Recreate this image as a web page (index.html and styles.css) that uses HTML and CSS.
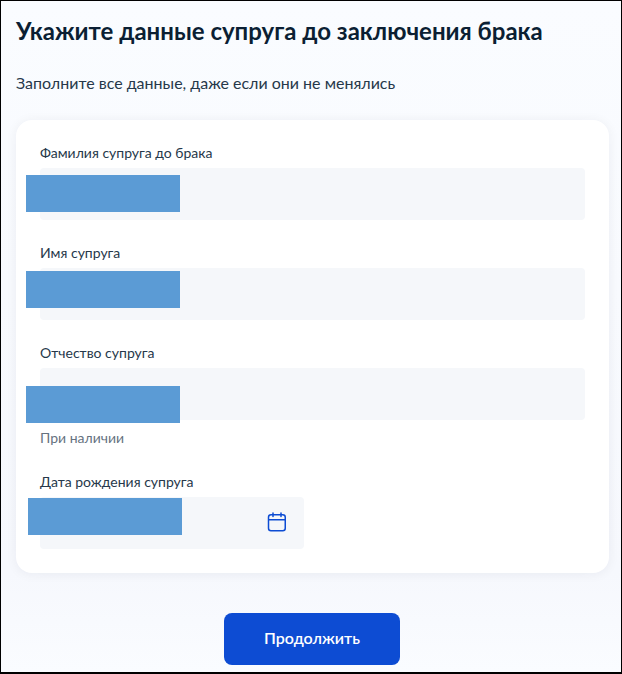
FILE: index.html
```html
<!DOCTYPE html>
<html lang="ru">
<head>
    <meta charset="UTF-8">
    <meta name="viewport" content="width=device-width, initial-scale=1.0">
    <title>Данные супруга</title>
    <link rel="stylesheet" href="styles.css">
</head>
<body>

    <div class="page">
        <h1>Укажите данные супруга до заключения брака</h1>
        <p class="subtitle">Заполните все данные, даже если они не менялись</p>

        <div class="card">
            <div class="form-row">
                <div class="form-label">Фамилия супруга до брака</div>
                <div class="form-input">
                    <div class="hidden-block hidden-top"></div>
                </div>
            </div>

            <div class="form-row">
                <div class="form-label">Имя супруга</div>
                <div class="form-input">
                    <div class="hidden-block hidden-up"></div>
                </div>
            </div>

            <div class="form-row">
                <div class="form-label">Отчество супруга</div>
                <div class="form-input">
                    <div class="hidden-block hidden-down"></div>
                </div>
                <div class="form-hint">При наличии</div>
            </div>

            <div class="form-row form-row-date">
                <div class="form-label">Дата рождения супруга</div>
                <div class="form-input form-input-date">
                    <div class="hidden-block hidden-date"></div>
                    <svg class="calendar-icon" width="20" height="20" viewBox="0 0 20 20" fill="none" stroke="#0d4cd3" stroke-width="1.5">
                        <rect x="1.5" y="2.75" width="16.75" height="16" rx="2.5"/>
                        <path d="M2 7.75H18"/>
                        <path d="M6 1V4.5M14 1V4.5" stroke-linecap="round"/>
                    </svg>
                </div>
            </div>
        </div>

        <div class="actions">
            <button class="continue-btn">Продолжить</button>
        </div>
    </div>

</body>
</html>
```

FILE: styles.css
```css
* {
    box-sizing: border-box;
}
html, body {
    margin: 0;
    padding: 0;
}
body {
    width: 622px;
    height: 674px;
    overflow: hidden;
    font-family: 'Lato', 'Noto Sans', sans-serif;
    color: #0b1f33;
}
.page {
    height: 674px;
    padding: 15px 12px 0 15px;
    border: 1px solid #000;
    border-width: 1px 1px 2px 1px;
    background: linear-gradient(180deg, #fafcff 0%, #f6f8fd 85%, #fafcff 100%);
}
h1 {
    margin: 0;
    font-size: 24px;
    line-height: 30px;
    font-weight: 700;
}
.subtitle {
    margin: 25px 0 0;
    font-size: 16px;
    line-height: 24px;
    color: #26384a;
}
.card {
    width: 593px;
    height: 453px;
    margin-top: 25px;
    padding: 23px 24px 0;
    background-color: #fff;
    border-radius: 16px;
    box-shadow: 0 1px 12px rgba(11, 31, 53, 0.06);
}
.form-row {
    margin-bottom: 23px;
}
.form-row-date {
    margin-top: 24px;
    margin-bottom: 0;
}
.form-label {
    font-size: 14px;
    line-height: 20px;
    margin-bottom: 5px;
    color: #26384a;
}
.form-input {
    position: relative;
    height: 52px;
    background-color: #f5f7fa;
    border-radius: 4px;
}
.form-input-date {
    display: flex;
    align-items: center;
    justify-content: flex-end;
    width: 264px;
    padding: 0 17px 2px 0;
}
.calendar-icon {
    display: block;
}
.form-hint {
    margin-top: 8px;
    font-size: 14px;
    line-height: 20px;
    color: #66727f;
}
/* закрашенные данные поверх полей */
.hidden-block {
    position: absolute;
    left: -14px;
    width: 154px;
    height: 37px;
    background-color: #5b9bd5;
}
.hidden-top {
    top: 7px;
}
.hidden-up {
    top: 3px;
}
.hidden-down {
    top: 18px;
}
.hidden-date {
    left: -12px;
    top: 1px;
}
.actions {
    display: flex;
    justify-content: center;
    margin-top: 40px;
    padding-right: 1px;
}
.continue-btn {
    width: 176px;
    height: 52px;
    padding: 0 0 4px;
    background-color: #0d4cd3;
    color: #fff;
    border: none;
    border-radius: 8px;
    font-family: inherit;
    font-size: 16px;
    font-weight: 600;
    cursor: pointer;
}
```
